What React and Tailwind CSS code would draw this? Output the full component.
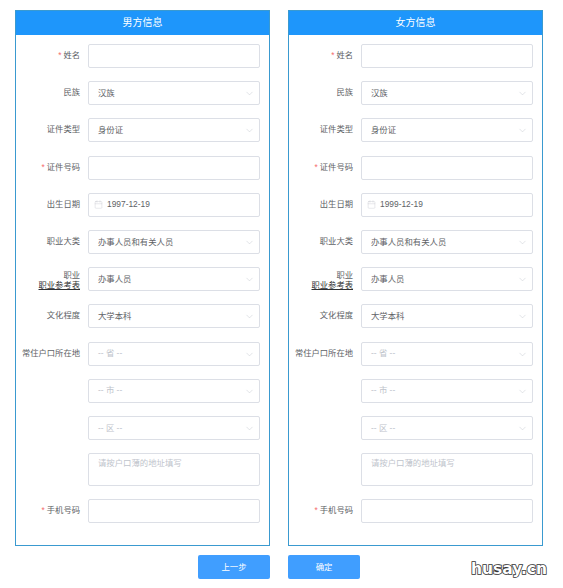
import { Calendar, ChevronDown } from "lucide-react";

const font = "font-['Liberation_Sans','Noto_Sans_CJK_SC',sans-serif]";

function Label({ text, required }) {
  return (
    <div className="w-[64px] shrink-0 text-right text-[8.3px] leading-[23px] text-[#606266] whitespace-nowrap">
      {required && <span className="text-[#f56c6c] mr-[2px]">*</span>}
      {text}
    </div>
  );
}

function Row({ label, required, children }) {
  return (
    <div className="flex gap-[8px]">
      <Label text={label} required={required} />
      <div className="w-[172px]">{children}</div>
    </div>
  );
}

function TextBox() {
  return <div className="h-[24px] rounded-[2px] border border-[#dcdfe6] bg-white" />;
}

function SelectBox({ value, placeholder }) {
  return (
    <div className="h-[24px] rounded-[2px] border border-[#dcdfe6] bg-white flex items-center justify-between pl-[9px] pr-[4px]">
      <span className={`text-[8.4px] ${placeholder ? "text-[#c0c4cc]" : "text-[#606266]"}`}>{value}</span>
      <ChevronDown size={11} strokeWidth={1} className="text-[#c0c4cc] mt-[1px]" />
    </div>
  );
}

function PersonCard({ title, birthday }) {
  return (
    <div className="w-[255px] h-[536px] border border-[#3a9ad0] bg-white">
      <div className="h-[24px] bg-[#1e96fb] text-white text-[10px] leading-[24px] text-center">{title}</div>
      <div className="flex flex-col gap-[13.2px] pt-[9px]">
        <Row label="姓名" required><TextBox /></Row>
        <Row label="民族"><SelectBox value="汉族" /></Row>
        <Row label="证件类型"><SelectBox value="身份证" /></Row>
        <Row label="证件号码" required><TextBox /></Row>
        <Row label="出生日期">
          <div className="h-[24px] rounded-[2px] border border-[#dcdfe6] bg-white flex items-center gap-[4px] pl-[5px]">
            <Calendar size={9} strokeWidth={1} className="text-[#c0c4cc]" />
            <span className="text-[8.4px] text-[#606266]">{birthday}</span>
          </div>
        </Row>
        <Row label="职业大类"><SelectBox value="办事人员和有关人员" /></Row>
        <div className="flex gap-[8px]">
          <div className="w-[64px] shrink-0 pt-[3px] text-right text-[8.3px] leading-[10px] text-[#606266] whitespace-nowrap">
            <div>职业</div>
            <div className="underline text-[#303133]">职业参考表</div>
          </div>
          <div className="w-[172px]"><SelectBox value="办事人员" /></div>
        </div>
        <Row label="文化程度"><SelectBox value="大学本科" /></Row>
        <Row label="常住户口所在地"><SelectBox value="-- 省 --" placeholder /></Row>
        <Row label=""><SelectBox value="-- 市 --" placeholder /></Row>
        <Row label=""><SelectBox value="-- 区 --" placeholder /></Row>
        <Row label="">
          <div className="h-[33px] rounded-[2px] border border-[#dcdfe6] bg-white px-[9px] py-[3px] text-[8.4px] text-[#c0c4cc]">
            请按户口薄的地址填写
          </div>
        </Row>
        <Row label="手机号码" required><TextBox /></Row>
      </div>
    </div>
  );
}

export default function App() {
  return (
    <div className={`relative w-[563px] h-[588px] bg-white pt-[10px] pl-[15px] overflow-hidden ${font}`}>
      <div className="flex gap-[18px]">
        <PersonCard title="男方信息" birthday="1997-12-19" />
        <PersonCard title="女方信息" birthday="1999-12-19" />
      </div>
      <div className="flex gap-[18px] mt-[9px] pl-[183px]">
        <button className="w-[72px] h-[24px] rounded-[2px] bg-[#409eff] text-white text-[8.4px]">上一步</button>
        <button className="w-[72px] h-[24px] rounded-[2px] bg-[#409eff] text-white text-[8.4px]">确定</button>
      </div>
      <div className="absolute left-[471px] top-[558px] font-['DejaVu_Sans',sans-serif] font-bold text-[15.5px] leading-[22px] text-white [-webkit-text-stroke:1.6px_#333] [paint-order:stroke_fill]">
        husay.cn
      </div>
    </div>
  );
}
